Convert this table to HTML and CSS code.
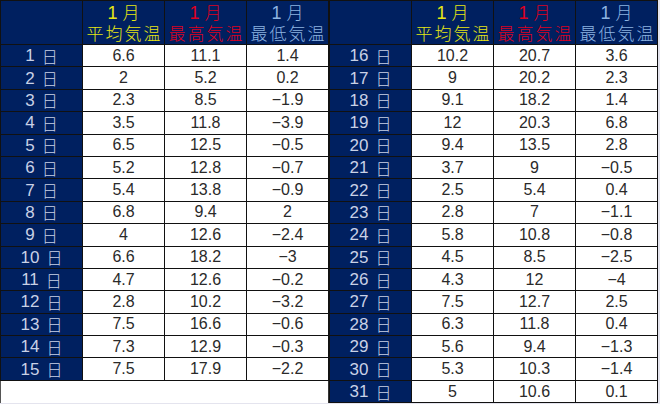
FILE: index.html
```html
<!DOCTYPE html>
<html lang="ja">
<head>
<meta charset="utf-8">
<title>1月の気温</title>
<link rel="stylesheet" href="styles.css">
</head>
<body>
<div class="sheet">
  <div class="half">
    <div class="grid">
      <div class="hd blank"></div>
      <div class="hd avg"><span class="l1"><span class="m">1</span>月</span><span class="l2">平均気温</span></div>
      <div class="hd max"><span class="l1"><span class="m">1</span>月</span><span class="l2">最高気温</span></div>
      <div class="hd min"><span class="l1"><span class="m">1</span>月</span><span class="l2">最低気温</span></div>
      <div class="day"><span class="n">1</span>日</div><div class="v">6.6</div><div class="v">11.1</div><div class="v">1.4</div>
      <div class="day"><span class="n">2</span>日</div><div class="v">2</div><div class="v">5.2</div><div class="v">0.2</div>
      <div class="day"><span class="n">3</span>日</div><div class="v">2.3</div><div class="v">8.5</div><div class="v">−1.9</div>
      <div class="day"><span class="n">4</span>日</div><div class="v">3.5</div><div class="v">11.8</div><div class="v">−3.9</div>
      <div class="day"><span class="n">5</span>日</div><div class="v">6.5</div><div class="v">12.5</div><div class="v">−0.5</div>
      <div class="day"><span class="n">6</span>日</div><div class="v">5.2</div><div class="v">12.8</div><div class="v">−0.7</div>
      <div class="day"><span class="n">7</span>日</div><div class="v">5.4</div><div class="v">13.8</div><div class="v">−0.9</div>
      <div class="day"><span class="n">8</span>日</div><div class="v">6.8</div><div class="v">9.4</div><div class="v">2</div>
      <div class="day"><span class="n">9</span>日</div><div class="v">4</div><div class="v">12.6</div><div class="v">−2.4</div>
      <div class="day"><span class="n">10</span>日</div><div class="v">6.6</div><div class="v">18.2</div><div class="v">−3</div>
      <div class="day"><span class="n">11</span>日</div><div class="v">4.7</div><div class="v">12.6</div><div class="v">−0.2</div>
      <div class="day"><span class="n">12</span>日</div><div class="v">2.8</div><div class="v">10.2</div><div class="v">−3.2</div>
      <div class="day"><span class="n">13</span>日</div><div class="v">7.5</div><div class="v">16.6</div><div class="v">−0.6</div>
      <div class="day"><span class="n">14</span>日</div><div class="v">7.3</div><div class="v">12.9</div><div class="v">−0.3</div>
      <div class="day"><span class="n">15</span>日</div><div class="v">7.5</div><div class="v">17.9</div><div class="v">−2.2</div>
    </div>
    <div class="filler"></div>
  </div>
  <div class="half">
    <div class="grid">
      <div class="hd blank"></div>
      <div class="hd avg"><span class="l1"><span class="m">1</span>月</span><span class="l2">平均気温</span></div>
      <div class="hd max"><span class="l1"><span class="m">1</span>月</span><span class="l2">最高気温</span></div>
      <div class="hd min"><span class="l1"><span class="m">1</span>月</span><span class="l2">最低気温</span></div>
      <div class="day"><span class="n">16</span>日</div><div class="v">10.2</div><div class="v">20.7</div><div class="v">3.6</div>
      <div class="day"><span class="n">17</span>日</div><div class="v">9</div><div class="v">20.2</div><div class="v">2.3</div>
      <div class="day"><span class="n">18</span>日</div><div class="v">9.1</div><div class="v">18.2</div><div class="v">1.4</div>
      <div class="day"><span class="n">19</span>日</div><div class="v">12</div><div class="v">20.3</div><div class="v">6.8</div>
      <div class="day"><span class="n">20</span>日</div><div class="v">9.4</div><div class="v">13.5</div><div class="v">2.8</div>
      <div class="day"><span class="n">21</span>日</div><div class="v">3.7</div><div class="v">9</div><div class="v">−0.5</div>
      <div class="day"><span class="n">22</span>日</div><div class="v">2.5</div><div class="v">5.4</div><div class="v">0.4</div>
      <div class="day"><span class="n">23</span>日</div><div class="v">2.8</div><div class="v">7</div><div class="v">−1.1</div>
      <div class="day"><span class="n">24</span>日</div><div class="v">5.8</div><div class="v">10.8</div><div class="v">−0.8</div>
      <div class="day"><span class="n">25</span>日</div><div class="v">4.5</div><div class="v">8.5</div><div class="v">−2.5</div>
      <div class="day"><span class="n">26</span>日</div><div class="v">4.3</div><div class="v">12</div><div class="v">−4</div>
      <div class="day"><span class="n">27</span>日</div><div class="v">7.5</div><div class="v">12.7</div><div class="v">2.5</div>
      <div class="day"><span class="n">28</span>日</div><div class="v">6.3</div><div class="v">11.8</div><div class="v">0.4</div>
      <div class="day"><span class="n">29</span>日</div><div class="v">5.6</div><div class="v">9.4</div><div class="v">−1.3</div>
      <div class="day"><span class="n">30</span>日</div><div class="v">5.3</div><div class="v">10.3</div><div class="v">−1.4</div>
      <div class="day"><span class="n">31</span>日</div><div class="v">5</div><div class="v">10.6</div><div class="v">0.1</div>
    </div>
  </div>
</div>
</body>
</html>
```

FILE: styles.css
```css
html, body {
  margin: 0;
  padding: 0;
}
body {
  background: #e4e4ee;
  width: 660px;
  height: 404px;
  overflow: hidden;
  font-family: "Liberation Sans", "Noto Sans CJK JP", sans-serif;
}
.sheet {
  display: flex;
  width: 658px;
  height: 403px;
  background: #fff;
}
.half {
  display: flex;
  flex-direction: column;
  width: 329px;
}
.grid {
  display: grid;
  grid-template-columns: 81px 81px 81px 81px;
  grid-template-rows: 43px;
  grid-auto-rows: 21.4px;
  gap: 1px;
  background: #111;
  border: 1px solid #111;
}
.hd {
  background: #002060;
  font-family: "Noto Sans CJK JP", sans-serif;
  font-weight: 300;
  font-size: 17px;
  line-height: 20px;
  letter-spacing: 2px;
  text-align: center;
  display: flex;
  flex-direction: column;
  align-items: center;
  justify-content: center;
  padding-left: 2px;
}
.hd .l1, .hd .l2 {
  display: block;
}
.hd .m {
  font-family: "Liberation Sans", sans-serif;
  font-size: 18px;
  margin-right: 3px;
}
.avg { color: #e6e612; }
.max { color: #dc0020; }
.min { color: #8db4e2; }
.day {
  background: #002060;
  color: #c9d1e6;
  font-family: "Noto Sans CJK JP", sans-serif;
  font-weight: 300;
  font-size: 16px;
  display: flex;
  align-items: center;
  justify-content: center;
  line-height: 1;
}
.day .n {
  font-family: "Liberation Sans", sans-serif;
  font-size: 17px;
  margin-right: 7px;
}
.v {
  background: #fff;
  color: #2a2a2a;
  font-size: 16px;
  display: flex;
  align-items: center;
  justify-content: center;
  line-height: 1;
}
.filler {
  flex: 1;
  background: #fff;
  border-left: 1px solid #555;
  border-right: 1px solid #333;
}
```
